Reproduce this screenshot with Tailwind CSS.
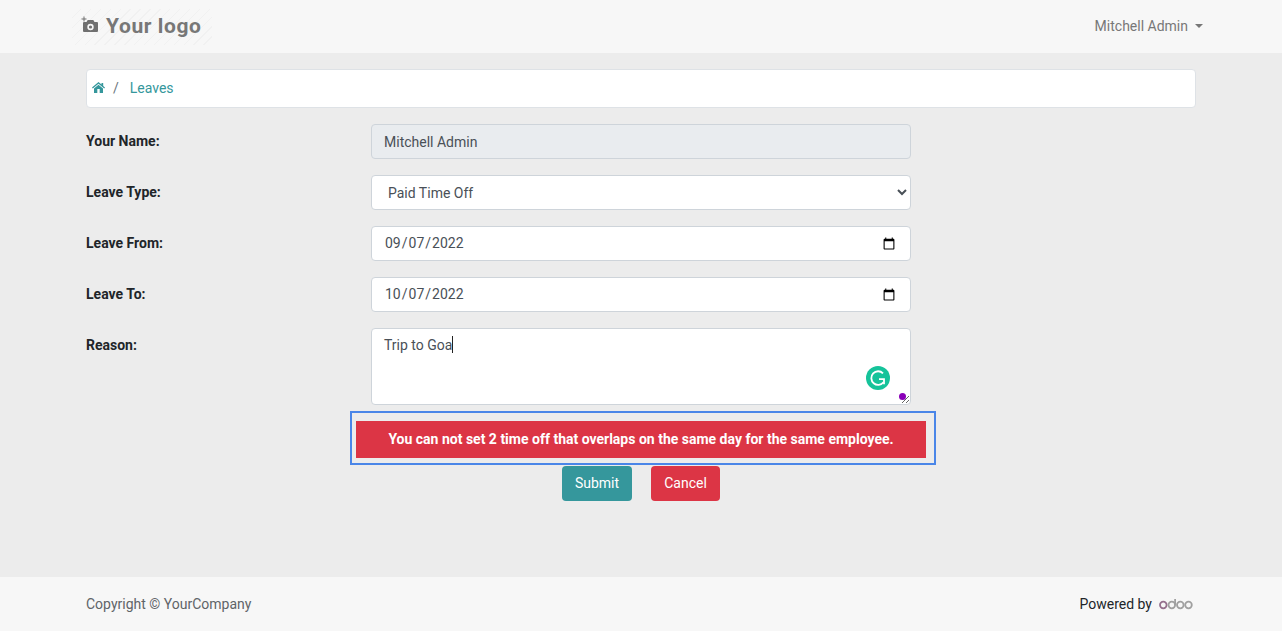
<!DOCTYPE html>
<html lang="en">
<head>
    <meta charset="UTF-8">
    <title>Leaves</title>
    <script src="https://cdn.jsdelivr.net/npm/@tailwindcss/browser@4"></script>
</head>
<body class="h-[631px] overflow-hidden flex flex-col bg-[#ececec] text-[14px] text-[#212529] font-['Roboto',sans-serif]">
    <!-- navbar -->
    <header class="h-[53px] shrink-0 bg-[#f7f7f7] flex items-center justify-between pl-[81px] pr-[79px]">
        <div class="flex items-center gap-[7px] text-[#777777] font-bold text-[21px] tracking-[0.6px] bg-[repeating-linear-gradient(135deg,#f7f7f7_0,#f7f7f7_6px,#f1f1f1_6px,#f1f1f1_7px)] h-[36px] -ml-[9px] pl-[9px] pr-[10px]">
            <svg class="w-[18px] h-[18px] mb-[3px]" viewBox="0 0 18 18" fill="#6f6f6f">
                <path d="M2.500 0.500h1v2h2v1h-2v2h-1v-2h-2v-1h2z"/>
                <path fill-rule="evenodd" d="M3 6h2.500l1.200-2h5.600l1.200 2h2.500a1 1 0 0 1 1 1v8a1 1 0 0 1-1 1H3a1 1 0 0 1-1-1V7a1 1 0 0 1 1-1zm6.500 1.800a3.200 3.200 0 1 0 0 6.400 3.200 3.200 0 0 0 0-6.400zm0 1.600a1.600 1.600 0 1 1 0 3.200 1.600 1.600 0 0 1 0-3.200z"/>
            </svg>
            <span>Your logo</span>
        </div>
        <div class="flex items-center gap-[7px] text-[#777777]">
            <span>Mitchell Admin</span>
            <span class="w-0 h-0 mb-[2px] border-x-[4px] border-x-transparent border-t-[4px] border-t-[#777777]"></span>
        </div>
    </header>

    <main class="flex-1 px-[86px] pt-[16px]">
        <!-- breadcrumb -->
        <nav class="w-[1110px] h-[39px] bg-white border border-[#dee2e6] rounded-[4px] flex items-center pl-[5px]">
            <svg class="w-[13px] h-[11px] mb-[2px] text-[#35979c]" viewBox="0 0 13 11" fill="currentColor">
                <path d="M6.500 0 9.500 2.500V1h1.700v3L13 5.600l-.8.900L6.500 1.800.8 6.500 0 5.600z"/>
                <path fill-rule="evenodd" d="M6.500 2.800 11 6.500V11H2V6.500zM5.300 7v4h2.400V7z"/>
            </svg>
            <span class="ml-[8px] text-[#6c757d]">/</span>
            <a class="ml-[11px] text-[#35979c]">Leaves</a>
        </nav>

        <form class="mt-[16px] w-[825px]">
            <div class="flex h-[35px]">
                <label class="w-[285px] font-bold text-[#212529] pt-[7px]">Your Name:</label>
                <input class="w-[540px] h-[35px] px-[12px] bg-[#e9ecef] border border-[#ced4da] rounded-[4px] text-[#495057] outline-none" value="Mitchell Admin" readonly>
            </div>
            <div class="flex h-[35px] mt-[16px]">
                <label class="w-[285px] font-bold pt-[7px]">Leave Type:</label>
                <select class="w-[540px] h-[35px] pl-[12px] pr-[12px] bg-white border border-[#ced4da] rounded-[4px] text-[#495057] outline-none appearance-auto">
                    <option>Paid Time Off</option>
                </select>
            </div>
            <div class="flex h-[35px] mt-[16px]">
                <label class="w-[285px] font-bold pt-[7px]">Leave From:</label>
                <input type="date" class="w-[540px] h-[35px] px-[12px] bg-white border border-[#ced4da] rounded-[4px] text-[#495057] outline-none" value="2022-09-07">
            </div>
            <div class="flex h-[35px] mt-[16px]">
                <label class="w-[285px] font-bold pt-[7px]">Leave To:</label>
                <input type="date" class="w-[540px] h-[35px] px-[12px] bg-white border border-[#ced4da] rounded-[4px] text-[#495057] outline-none" value="2022-10-07">
            </div>
            <div class="flex mt-[16px]">
                <label class="w-[285px] font-bold pt-[7px]">Reason:</label>
                <div class="relative w-[540px] h-[77px]">
                    <textarea class="block w-[540px] h-[77px] px-[12px] py-[6px] bg-white border border-[#ced4da] rounded-[4px] text-[#495057] outline-none">Trip to Goa</textarea>
                    <span class="absolute left-[81px] top-[8px] w-px h-[17px] bg-[#222222]"></span>
                    <!-- grammarly -->
                    <svg class="absolute left-[495px] top-[38px] w-[24px] h-[24px]" viewBox="0 0 24 24">
                        <circle cx="12" cy="12" r="12" fill="#15c39a"/>
                        <path d="M17 7.300A6.800 6.800 0 1 0 17.500 16.200" fill="none" stroke="#fff" stroke-width="1.800"/>
                        <path d="M13 13.200h5v5" fill="none" stroke="#fff" stroke-width="1.800"/>
                    </svg>
                    <span class="absolute left-[527.5px] top-[64.5px] w-[7px] h-[7px] rounded-full bg-[#8a00b8]"></span>
                </div>
            </div>

            <!-- error -->
            <div class="ml-[264px] w-[586px] h-[54px] mt-[6px] border-2 border-[#4a86e8] pt-[8px] pl-[4px]">
                <div class="w-[570px] h-[37px] bg-[#dc3545] text-white font-bold text-center leading-[36px]">You can not set 2 time off that overlaps on the same day for the same employee.</div>
            </div>

            <div class="flex ml-[476px] mt-[1px] gap-[19px]">
                <button type="button" class="w-[70px] h-[35px] bg-[#35979c] text-white rounded-[4px]">Submit</button>
                <button type="button" class="w-[69px] h-[35px] bg-[#dc3545] text-white rounded-[4px]">Cancel</button>
            </div>
        </form>
    </main>

    <footer class="h-[54px] shrink-0 bg-[#f7f7f7] flex items-center justify-between pl-[86px] pr-[89px]">
        <span class="text-[#5f6468]">Copyright © YourCompany</span>
        <div class="flex items-center">
            <span class="text-[#212529]">Powered by</span>
            <svg class="ml-[7px] w-[34px] h-[12px]" viewBox="0 0 34 12" fill="none" stroke-width="1.800">
                <circle cx="4.300" cy="7" r="3.300" stroke="#95708d"/>
                <circle cx="12.800" cy="7" r="3.300" stroke="#a0a0a0"/>
                <path d="M16.100 1v6" stroke="#a0a0a0"/>
                <circle cx="21.300" cy="7" r="3.300" stroke="#a0a0a0"/>
                <circle cx="29.500" cy="7" r="3.300" stroke="#a0a0a0"/>
            </svg>
        </div>
    </footer>
</body>
</html>
